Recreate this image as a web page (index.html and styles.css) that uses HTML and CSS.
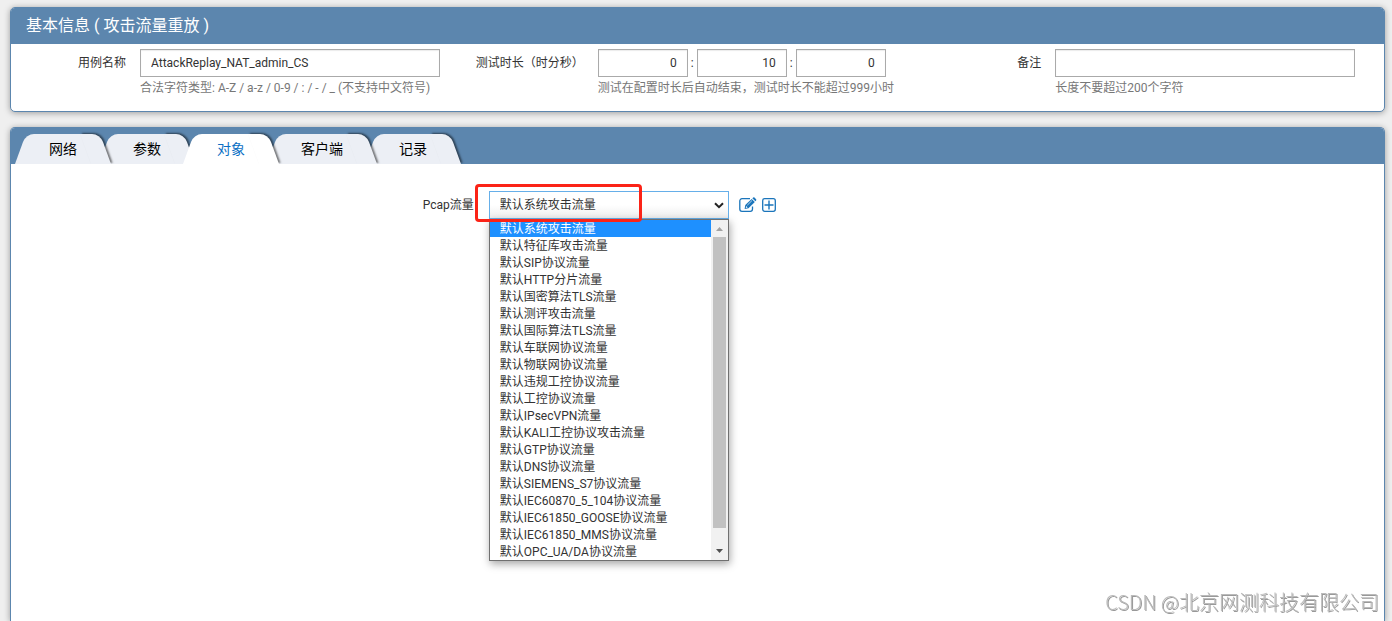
FILE: index.html
```html
<!DOCTYPE html>
<html lang="zh-CN">
<head>
<meta charset="utf-8">
<title>攻击流量重放</title>
<link rel="stylesheet" href="styles.css">
</head>
<body>
<section class="panel">
  <h1 class="panel-head">基本信息 ( 攻击流量重放 )</h1>
  <form class="basic">
    <div class="field">
      <label for="name">用例名称</label>
      <div class="control">
        <input class="text" id="name" type="text" value="AttackReplay_NAT_admin_CS">
        <p class="hint">合法字符类型: A-Z / a-z / 0-9 / : / - / _ (不支持中文符号)</p>
      </div>
    </div>
    <div class="field">
      <label for="hours">测试时长（时分秒）</label>
      <div class="control">
        <div class="duration">
          <input class="text num" id="hours" type="text" value="0" aria-label="时"><span>:</span>
          <input class="text num" type="text" value="10" aria-label="分"><span>:</span>
          <input class="text num" type="text" value="0" aria-label="秒">
        </div>
        <p class="hint">测试在配置时长后自动结束，测试时长不能超过999小时</p>
      </div>
    </div>
    <div class="field">
      <label for="remark">备注</label>
      <div class="control">
        <input class="text" id="remark" type="text">
        <p class="hint">长度不要超过200个字符</p>
      </div>
    </div>
  </form>
</section>

<section class="panel panel-main">
  <nav class="tabs" role="tablist">
    <button class="tab" role="tab" type="button"><span>网络</span></button>
    <button class="tab" role="tab" type="button"><span>参数</span></button>
    <button class="tab active" role="tab" type="button" aria-selected="true"><span>对象</span></button>
    <button class="tab" role="tab" type="button"><span>客户端</span></button>
    <button class="tab" role="tab" type="button"><span>记录</span></button>
  </nav>
  <div class="pcap">
    <label for="pcap">Pcap流量</label>
    <div class="pcap-control">
      <div class="combo">
        <select id="pcap"><option>默认系统攻击流量</option></select>
        <svg class="chevron" width="10" height="7" viewBox="0 0 10 7"><path d="M1 1.2 5 5.2 9 1.2" fill="none" stroke="#222" stroke-width="2"/></svg>
        <div class="popup">
          <ul class="options" role="listbox">
            <li class="selected" role="option">默认系统攻击流量</li>
            <li role="option">默认特征库攻击流量</li>
            <li role="option">默认SIP协议流量</li>
            <li role="option">默认HTTP分片流量</li>
            <li role="option">默认国密算法TLS流量</li>
            <li role="option">默认测评攻击流量</li>
            <li role="option">默认国际算法TLS流量</li>
            <li role="option">默认车联网协议流量</li>
            <li role="option">默认物联网协议流量</li>
            <li role="option">默认违规工控协议流量</li>
            <li role="option">默认工控协议流量</li>
            <li role="option">默认IPsecVPN流量</li>
            <li role="option">默认KALI工控协议攻击流量</li>
            <li role="option">默认GTP协议流量</li>
            <li role="option">默认DNS协议流量</li>
            <li role="option">默认SIEMENS_S7协议流量</li>
            <li role="option">默认IEC60870_5_104协议流量</li>
            <li role="option">默认IEC61850_GOOSE协议流量</li>
            <li role="option">默认IEC61850_MMS协议流量</li>
            <li role="option">默认OPC_UA/DA协议流量</li>
          </ul>
          <div class="scrollbar">
            <svg width="17" height="17" viewBox="0 0 17 17"><path d="M5 11h7L8.500 7z" fill="#a3a3a3"/></svg>
            <div class="thumb"></div>
            <svg width="17" height="17" viewBox="0 0 17 17"><path d="M5 6h7L8.500 10z" fill="#505050"/></svg>
          </div>
        </div>
        <div class="marker"></div>
      </div>
      <button class="icon" type="button" aria-label="编辑">
        <svg width="18" height="16" viewBox="0 0 18 16"><path d="M11 1.700H3A2.200 2.200 0 0 0 .8 3.900v8.200A2.200 2.200 0 0 0 3 14.300h8.300a2.200 2.200 0 0 0 2.200-2.200V9.500" fill="none" stroke="#1b75bb" stroke-width="1.300"/><path d="M5.600 11.900 6.300 8 12.600 1.900 15.800 5.100 9.500 11.200z" fill="#1b75bb"/><path d="M13.300 1.200 14.200.5Q14.900 0 15.500.6L17.100 2.200Q17.600 2.800 17.100 3.400L16.400 4.300z" fill="#1b75bb"/><path d="M7.200 9.100 8.600 10.500 6.800 10.900z" fill="#fff"/><path d="M8.300 8.200 13 3.500" stroke="#fff" stroke-width=".7"/></svg>
      </button>
      <button class="icon" type="button" aria-label="添加">
        <svg width="14" height="16" viewBox="0 0 14 16"><rect x=".7" y="1.700" width="12.600" height="12.600" rx="2" fill="none" stroke="#1b75bb" stroke-width="1.300"/><path d="M7 3.500v9M2.500 8h9" stroke="#1b75bb" stroke-width="1.400"/></svg>
      </button>
    </div>
  </div>
</section>
<div class="watermark">CSDN @北京网测科技有限公司</div>
</body>
</html>
```
FILE: styles.css
```css
* { box-sizing: border-box; }

body {
  margin: 0;
  padding: 7px 7px 0 10px;
  min-height: 100vh;
  display: flex;
  flex-direction: column;
  gap: 15px;
  overflow: hidden;
  background: #efefef;
  color: #333;
  font: 12px/18px Roboto, "Noto Sans CJK SC", sans-serif;
}

input, select, button { font: inherit; color: inherit; margin: 0; }

.panel {
  background: #fff;
  border: 1px solid #5c86ae;
  border-radius: 5px;
  box-shadow: 0 1px 6px rgba(0, 0, 0, .35);
}

.panel-main {
  flex: 1;
  border-bottom: 0;
  border-radius: 5px 5px 0 0;
}

.panel-head {
  margin: 0;
  padding-left: 15px;
  height: 36px;
  background: #5c86ae;
  border-radius: 4px 4px 0 0;
  color: #fff;
  font-size: 16px;
  font-weight: 400;
  line-height: 36px;
}

.basic {
  display: grid;
  grid-template-columns: repeat(3, 1fr);
  padding: 5px 0 14px;
}

.field {
  display: grid;
  grid-template-columns: 115px 1fr;
  column-gap: 14px;
}

.field label {
  line-height: 28px;
  text-align: right;
  white-space: nowrap;
}

.text {
  display: block;
  width: 300px;
  height: 28px;
  padding: 0 10px;
  border: 1px solid #aaa;
  border-radius: 0;
  background: #fff;
  box-shadow: inset 0 1px 1px rgba(0, 0, 0, .08);
}

.num { width: 90px; text-align: right; }

.duration { display: flex; line-height: 28px; }
.duration span { width: 9px; text-align: center; }

.hint {
  margin: 2px 0 0;
  color: #777;
  white-space: nowrap;
}

.tabs {
  display: flex;
  height: 36px;
  padding: 6px 0 0 4px;
  background: #5c86ae;
  border-radius: 4px 4px 0 0;
  overflow: hidden;
}

.tab {
  --fill: #eceff5;
  position: relative;
  isolation: isolate;
  height: 30px;
  margin-right: -12px;
  padding: 0 34px;
  border: 0;
  background: linear-gradient(var(--fill), var(--fill)) center / calc(100% - 40px) 100% no-repeat;
  color: #000;
  font-size: 14px;
  line-height: 30px;
}

.tab span { position: relative; }

.tab::before, .tab::after {
  content: "";
  position: absolute;
  z-index: -1;
  top: 0;
  bottom: 0;
  background: var(--fill);
}

.tab::before {
  left: 0;
  width: calc(100% - 31px);
  border-radius: 8px 0 0 0;
  transform: skewX(-20deg);
  transform-origin: bottom;
}

.tab::after {
  right: 0;
  width: 20px;
  border-radius: 0 8px 0 0;
  box-shadow: 2px -1px 2px rgba(0, 0, 0, .5);
  transform: skewX(20deg);
  transform-origin: bottom;
}

.tab:nth-child(1) { z-index: 5; }
.tab:nth-child(2) { z-index: 4; }
.tab:nth-child(4) { z-index: 2; }
.tab:nth-child(5) { z-index: 1; }
.tab.active { --fill: #fff; z-index: 6; color: #0b6fc4; }

.pcap {
  display: grid;
  grid-template-columns: 34% 1fr;
  column-gap: 11px;
  padding-top: 27px;
}

.pcap label {
  padding-right: 4px;
  line-height: 28px;
  text-align: right;
}

.pcap-control { display: flex; align-items: center; }

.combo { position: relative; width: 240px; margin-right: 10px; }

.combo select {
  display: block;
  width: 100%;
  height: 28px;
  padding: 0 10px;
  appearance: none;
  border: 1px solid #66afe9;
  border-radius: 0;
  background: linear-gradient(#fff 50%, #eee);
}

.chevron { position: absolute; right: 5px; top: 11px; }

.popup {
  position: absolute;
  z-index: 1;
  top: 100%;
  left: 0;
  right: 0;
  display: flex;
  background: #fff;
  border: 1px solid #707070;
  box-shadow: 1px 3px 8px rgba(0, 0, 0, .35);
}

.options {
  flex: 1;
  margin: 0;
  padding: 0;
  list-style: none;
  line-height: 16px;
}

.options li { padding: 1px 0 0 10px; white-space: nowrap; }
.options .selected { background: #1e90ff; color: #fff; }

.scrollbar {
  display: flex;
  flex-direction: column;
  width: 17px;
  background: #f1f1f1;
}

.scrollbar svg { display: block; }
.thumb { flex: 1; margin: 0 2px 15px; background: #c1c1c1; }

.marker {
  position: absolute;
  z-index: 2;
  top: -7px;
  left: -14px;
  width: 167px;
  height: 38px;
  border: 3px solid #fb2317;
  border-radius: 4px;
  pointer-events: none;
}

.icon {
  display: block;
  margin-right: 5px;
  padding: 0;
  border: 0;
  background: none;
}

.icon svg { display: block; }

.watermark {
  position: fixed;
  right: 13px;
  bottom: 4px;
  color: #bbb;
  font: 300 20px/30px "Noto Sans CJK SC", sans-serif;
  text-shadow: 1px 1px 0 #999;
}
```
